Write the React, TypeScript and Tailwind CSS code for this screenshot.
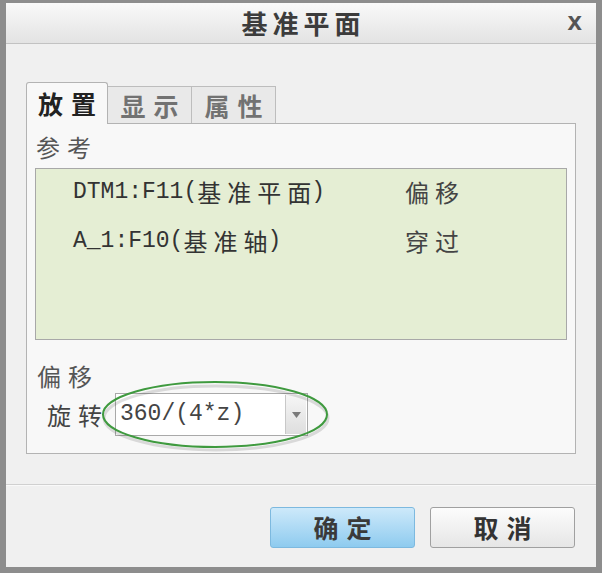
export default function App() {
  const cjk = "font-['Noto_Sans_CJK_SC',sans-serif]";
  const mono = "font-['Liberation_Mono','Noto_Sans_CJK_SC',monospace]";
  return (
    <div className="relative w-[602px] h-[573px] bg-[#8d8d8d] pt-[3px] px-[6px] pb-[6px]">
      <div className="flex flex-col h-full bg-[#f0f0f0]">
        {/* title bar */}
        <div className="relative h-[41px] shrink-0 flex items-center justify-center border-b border-[#c2c2c2] bg-gradient-to-b from-[#f9f9f9] to-[#e3e3e3]">
          <span className={`${cjk} text-[26px] font-bold tracking-[5px] pl-[5px] leading-none text-[#3c3c3c]`}>基准平面</span>
          <span className="absolute right-[14px] top-[5px] font-['Liberation_Sans',sans-serif] text-[26px] font-bold leading-[26px] text-[#555]">x</span>
        </div>

        {/* body */}
        <div className="px-[20px] pt-[38px]">
          {/* tabs */}
          <div className={`${cjk} flex items-end h-[41px]`}>
            <div className="relative z-10 mb-[-1px] w-[82px] h-[42px] flex items-center justify-center border border-b-0 border-[#b3b3b3] rounded-t-[3px] bg-[#f8f8f8]">
              <span className="text-[25px] font-bold tracking-[8px] pl-[8px] leading-none text-[#222]">放置</span>
            </div>
            <div className="w-[84px] h-[37px] flex items-center justify-center border-t border-r border-[#bdbdbd] bg-[#e9e9e9]">
              <span className="text-[25px] font-bold tracking-[8px] pl-[8px] leading-none text-[#727272]">显示</span>
            </div>
            <div className="w-[84px] h-[37px] flex items-center justify-center border-t border-r border-[#bdbdbd] bg-[#e9e9e9]">
              <span className="text-[25px] font-bold tracking-[8px] pl-[8px] leading-none text-[#727272]">属性</span>
            </div>
          </div>

          {/* panel */}
          <div className="h-[331px] border border-[#b3b3b3] bg-[#f8f8f8] px-[8px]">
            <div className={`${cjk} mt-[10px] h-[26px] leading-[26px] pl-[1px] text-[24px] tracking-[7px] text-[#555]`}>参考</div>
            <div className="mt-[8px] h-[172px] border border-[#a8a8a8] bg-[#e5eed4] pt-[8px] pl-[37px]">
              <div className={`${mono} grid grid-cols-[332px_1fr] grid-rows-[30px_30px] gap-y-[19px] text-[23px] text-[#333]`}>
                <div className="h-[30px] flex items-center whitespace-nowrap">
                  <span>DTM1:F11(</span>
                  <span className={`${cjk} text-[24px] tracking-[6px] leading-none`}>基准平</span>
                  <span className={`${cjk} text-[24px] leading-none`}>面</span>
                  <span>)</span>
                </div>
                <div className={`${cjk} h-[30px] flex items-center text-[24px] tracking-[6px] leading-none text-[#444]`}>偏移</div>
                <div className="h-[30px] flex items-center whitespace-nowrap">
                  <span>A_1:F10(</span>
                  <span className={`${cjk} text-[24px] tracking-[6px] leading-none`}>基准</span>
                  <span className={`${cjk} text-[24px] leading-none`}>轴</span>
                  <span>)</span>
                </div>
                <div className={`${cjk} h-[30px] flex items-center text-[24px] tracking-[6px] leading-none text-[#444]`}>穿过</div>
              </div>
            </div>

            <div className={`${cjk} mt-[23px] h-[26px] leading-[26px] pl-[2px] text-[24px] tracking-[7px] text-[#555]`}>偏移</div>
            <div className="mt-[4px] h-[43px] flex items-center">
              <span className={`${cjk} ml-[12px] w-[68px] text-[24px] tracking-[7px] leading-none text-[#444]`}>旋转</span>
              <div className="w-[193px] h-[43px] flex border border-[#a9a9a9] bg-white">
                <div className={`${mono} flex-1 pl-[4px] text-[23px] leading-[41px] text-[#444]`}>360/(4*z)</div>
                <div className="w-[21px] my-[1px] mr-[1px] flex items-center justify-center border-l border-[#c8c8c8] bg-gradient-to-b from-[#f6f6f6] to-[#dedede]">
                  <svg width="9" height="6" viewBox="0 0 9 6">
                    <path d="M0 0 L9 0 L4.5 6 Z" fill="#7a7a7a" />
                  </svg>
                </div>
              </div>
            </div>
          </div>
        </div>

        {/* separator */}
        <div className="mt-[30px] h-[2px] border-t border-[#d0d0d0] bg-white/60"></div>

        {/* footer */}
        <div className={`${cjk} flex justify-end gap-[15px] pt-[21px] pr-[21px]`}>
          <div className="w-[145px] h-[41px] flex items-center justify-center rounded-[3px] border border-[#7db9df] bg-gradient-to-b from-[#cde9fa] to-[#8ecbef]">
            <span className="text-[25px] font-bold tracking-[8px] pl-[8px] leading-none text-[#3a3a3a]">确定</span>
          </div>
          <div className="w-[145px] h-[41px] flex items-center justify-center rounded-[3px] border border-[#a0a0a0] bg-gradient-to-b from-[#fcfcfc] to-[#e6e6e6]">
            <span className="text-[25px] font-bold tracking-[8px] pl-[8px] leading-none text-[#333]">取消</span>
          </div>
        </div>
      </div>

      {/* annotation ellipse */}
      <svg className="absolute left-0 top-0 pointer-events-none" width="602" height="573">
        <ellipse cx="216" cy="418" rx="112" ry="32" fill="none" stroke="#000" strokeOpacity="0.12" strokeWidth="3" />
        <ellipse cx="215" cy="414.5" rx="112" ry="32.5" fill="none" stroke="#3f9a3f" strokeWidth="2" />
      </svg>
    </div>
  );
}
